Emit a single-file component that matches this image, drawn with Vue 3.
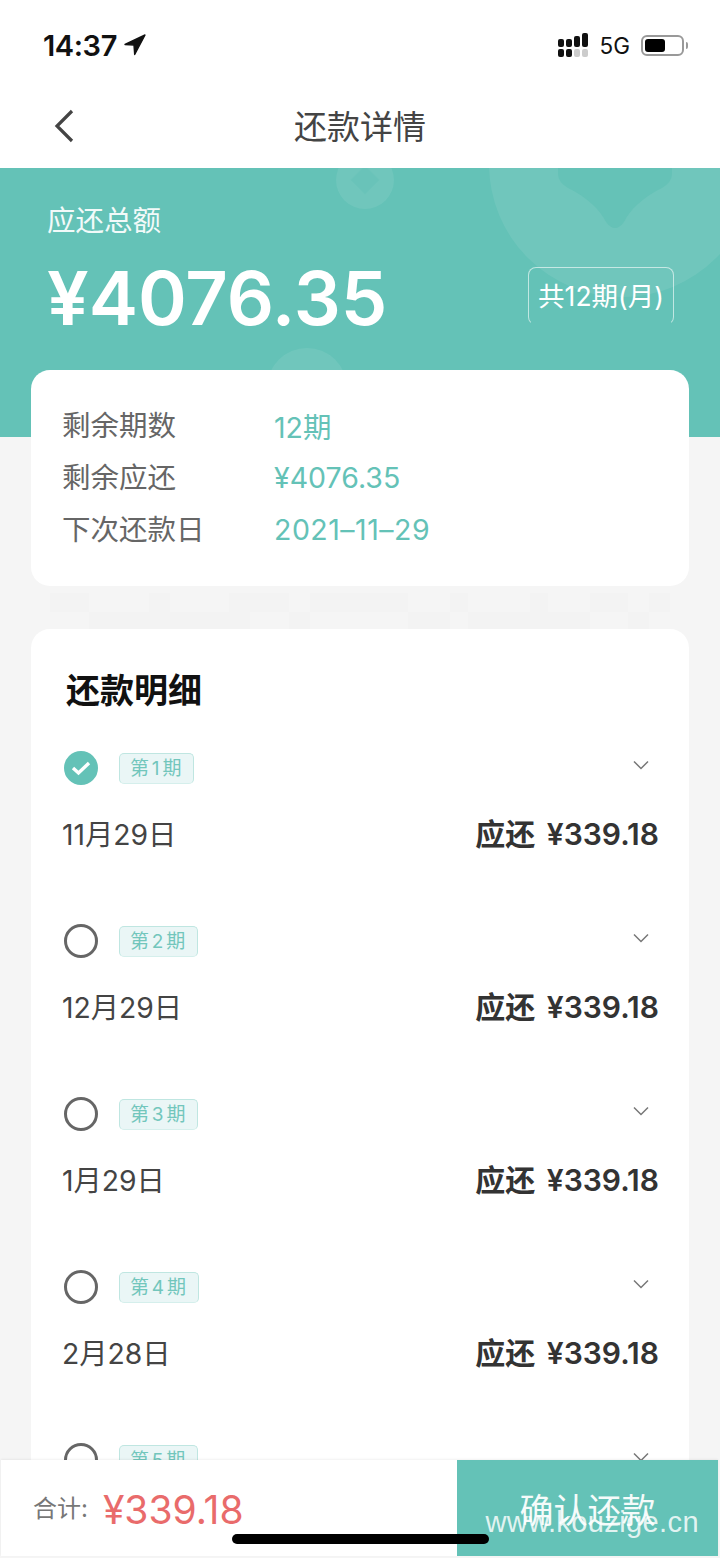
<template>
  <div class="page">
    <header class="status-bar">
      <div class="time">
        <span>14:37</span>
        <svg class="location" width="24" height="24" viewBox="0 0 24 24">
          <path d="M22 2 2 11.5l9 .6.7 9.4z" fill="#111" stroke="#111" stroke-width="1.4" stroke-linejoin="round" />
        </svg>
      </div>
      <div class="status-right">
        <div class="signal">
          <i v-for="(bar, i) in signalBars" :key="i" :class="['bar', `bar-${i}`]">
            <b></b>
            <b :class="{ dim: i > 1 }"></b>
          </i>
        </div>
        <span class="network">5G</span>
        <div class="battery"><div class="battery-level"></div></div>
        <div class="battery-cap"></div>
      </div>
    </header>

    <nav class="nav">
      <svg class="back" width="24" height="36" viewBox="0 0 24 36">
        <path d="M20 3 5 18l15 15" fill="none" stroke="#444" stroke-width="3.2" />
      </svg>
      <h1 class="nav-title">还款详情</h1>
    </nav>

    <section class="hero">
      <div class="coin coin-small"><span class="coin-hole"></span></div>
      <div class="coin coin-large"></div>
      <svg class="coin-heart" width="114" height="64" viewBox="0 0 114 64">
        <path
          d="M0 0H114V6Q114 14 104 20C84 30 72 42 66 54Q57 66 48 54C42 42 30 30 10 20Q0 14 0 6Z"
          fill="#65c2b7"
        />
      </svg>
      <div class="coin coin-bottom"></div>
      <div class="hero-label">应还总额</div>
      <div class="hero-row">
        <div class="hero-amount">¥4076.35</div>
        <div class="hero-tag">共12期(月)</div>
      </div>
    </section>

    <main class="content">
      <section class="card info-card">
        <div v-for="item in summary" :key="item.label" class="info-row">
          <span class="info-label">{{ item.label }}</span>
          <span class="info-value">{{ item.value }}</span>
        </div>
      </section>

      <svg class="noise" width="658" height="43" viewBox="0 0 658 43">
        <rect
          v-for="(block, i) in noiseBlocks"
          :key="i"
          :x="block[0]"
          :y="block[1]"
          :width="block[2]"
          :height="block[3]"
          fill="#f3f3f3"
        />
      </svg>

      <section class="card detail-card">
        <h2 class="detail-title">还款明细</h2>
        <div v-for="(row, i) in rows" :key="row.period" class="plan">
          <div class="plan-head">
            <span :class="['radio', { checked: i === 0 }]">
              <svg v-if="i === 0" width="20" height="16" viewBox="0 0 20 16">
                <path d="M2 8 7.5 13 18 3" fill="none" stroke="#fff" stroke-width="3.4" />
              </svg>
            </span>
            <span class="period">{{ row.period }}</span>
            <svg class="chevron" width="16" height="10" viewBox="0 0 16 10">
              <path d="M1 1.5 8 8.5 15 1.5" fill="none" stroke="#777" stroke-width="1.5" />
            </svg>
          </div>
          <div class="plan-body">
            <span class="plan-date">{{ row.date }}</span>
            <span class="plan-amount">应还 ¥339.18</span>
          </div>
        </div>
      </section>
    </main>

    <footer class="bottom-bar">
      <div class="total">
        <span class="total-label">合计:</span>
        <span class="total-value">¥339.18</span>
      </div>
      <button class="confirm">确认还款</button>
    </footer>
    <div class="home-indicator"></div>
    <div class="watermark">www.kouzige.cn</div>
  </div>
</template>

<script setup>
const signalBars = [0, 1, 2, 3]

const summary = [
  { label: '剩余期数', value: '12期' },
  { label: '剩余应还', value: '¥4076.35' },
  { label: '下次还款日', value: '2021–11–29' }
]

const rows = [
  { period: '第 1 期', date: '11月29日' },
  { period: '第 2 期', date: '12月29日' },
  { period: '第 3 期', date: '1月29日' },
  { period: '第 4 期', date: '2月28日' },
  { period: '第 5 期', date: '3月29日' }
]

// faint blotches in the gap between the two cards: x, y, width, height
const noiseBlocks = [
  [19, 7, 39, 19],
  [118, 7, 21, 19],
  [198, 7, 60, 19],
  [279, 7, 98, 19],
  [419, 7, 18, 19],
  [499, 7, 18, 19],
  [559, 7, 38, 19],
  [618, 7, 21, 19],
  [58, 26, 161, 17],
  [258, 26, 21, 17],
  [377, 26, 42, 17],
  [437, 26, 122, 17],
  [597, 26, 21, 17]
]
</script>

<style>
html,
body {
  margin: 0;
  background: #f5f5f5;
}
</style>

<style scoped>
.page {
  position: relative;
  width: 720px;
  height: 1558px;
  overflow: hidden;
  background: #f5f5f5;
  font-family: Inter, "Noto Sans CJK SC", sans-serif;
  color: #333;
}

.status-bar {
  height: 85px;
  box-sizing: border-box;
  padding: 28px 32px 0 43px;
  background: #fff;
  display: flex;
  justify-content: space-between;
  align-items: flex-start;
}

.time {
  display: flex;
  align-items: center;
  gap: 6px;
  height: 34px;
  font-size: 29px;
  font-weight: 600;
  color: #111;
  letter-spacing: -0.4px;
}

.status-right {
  display: flex;
  align-items: center;
  height: 34px;
}

.signal {
  display: flex;
  align-items: flex-end;
  gap: 2px;
  margin-right: 12px;
  height: 24px;
}

.bar {
  display: flex;
  flex-direction: column;
  gap: 2px;
  width: 6px;
}

.bar b {
  display: block;
  height: 8px;
  background: #111;
  border-radius: 2px;
}

.bar b.dim {
  background: #ccc;
}

.bar-2 b:first-child {
  height: 11px;
}

.bar-3 b:first-child {
  height: 14px;
}

.network {
  font-size: 22.5px;
  color: #111;
  margin-right: 11px;
}

.battery {
  width: 43px;
  height: 21px;
  box-sizing: border-box;
  border: 2px solid #999;
  border-radius: 6px;
  padding: 2px;
}

.battery-level {
  width: 20px;
  height: 100%;
  background: #000;
  border-radius: 3px;
}

.battery-cap {
  width: 2px;
  height: 7px;
  margin-left: 2px;
  background: #999;
  border-radius: 0 2px 2px 0;
}

.nav {
  position: relative;
  height: 83px;
  box-sizing: border-box;
  padding-bottom: 4px;
  background: #fff;
  display: flex;
  align-items: center;
  justify-content: center;
}

.back {
  position: absolute;
  left: 52px;
  top: 23px;
}

.nav-title {
  margin: 0;
  font-size: 33px;
  font-weight: 400;
  color: #444;
}

.hero {
  position: relative;
  height: 269px;
  box-sizing: border-box;
  padding: 34px 46px 0 47px;
  background: #64c2b7;
  overflow: hidden;
  color: #fff;
}

.coin {
  position: absolute;
  border-radius: 50%;
  background: rgba(255, 255, 255, 0.08);
}

.coin-small {
  width: 58px;
  height: 58px;
  left: 336px;
  top: -17px;
}

.coin-hole {
  position: absolute;
  left: 19px;
  top: 19px;
  width: 20px;
  height: 20px;
  background: #64c2b7;
  opacity: 0.6;
  transform: rotate(45deg);
}

.coin-large {
  width: 266px;
  height: 266px;
  left: 489px;
  top: -137px;
}

.coin-heart {
  position: absolute;
  left: 558px;
  top: 0;
}

.coin-bottom {
  width: 80px;
  height: 80px;
  left: 267px;
  top: 180px;
}

.hero-label {
  position: relative;
  font-size: 28.5px;
  line-height: 38px;
  opacity: 0.92;
}

.hero-row {
  position: relative;
  display: flex;
  justify-content: space-between;
  align-items: center;
  margin-top: 18px;
}

.hero-amount {
  font-size: 74px;
  line-height: 80px;
  font-weight: 600;
}

.hero-tag {
  width: 146px;
  height: 58px;
  margin-top: -4px;
  box-sizing: border-box;
  border: 1px solid rgba(255, 255, 255, 0.6);
  border-bottom-color: transparent;
  border-radius: 8px;
  font-size: 26.5px;
  line-height: 56px;
  text-align: center;
  white-space: nowrap;
}

.content {
  margin-top: -67px;
  padding: 0 31px;
  position: relative;
}

.card {
  background: #fff;
  border-radius: 19px;
}

.info-card {
  height: 216px;
  box-sizing: border-box;
  padding: 29px 31px 0;
}

.info-row {
  display: flex;
  height: 52px;
  align-items: center;
  font-size: 28.5px;
}

.info-label {
  width: 212px;
  margin-top: -3px;
  color: #666;
}

.info-value {
  color: #64c2b7;
}

.info-row:last-child .info-value {
  letter-spacing: 0.5px;
}

.noise {
  display: block;
}

.detail-card {
  padding: 39px 31px 0;
  height: 900px;
  box-sizing: border-box;
}

.detail-title {
  margin: 0 0 0 4px;
  font-size: 34px;
  line-height: 46px;
  font-weight: 700;
  color: #111;
}

.plan {
  height: 173px;
}

.plan-head {
  position: relative;
  display: flex;
  align-items: center;
  height: 36px;
  padding-top: 36px;
  padding-left: 2px;
}

.radio {
  width: 34px;
  height: 34px;
  box-sizing: border-box;
  border: 3px solid #666;
  border-radius: 50%;
  display: flex;
  align-items: center;
  justify-content: center;
  margin-right: 21px;
}

.radio.checked {
  background: #64c2b7;
  border-color: #64c2b7;
}

.period {
  height: 31px;
  box-sizing: border-box;
  padding: 0 12px 0 10px;
  border: 1px solid #bfe6e1;
  border-bottom-color: #d5efec;
  border-radius: 5px;
  background: #eaf6f6;
  color: #72c6bc;
  font-size: 19px;
  line-height: 29px;
  word-spacing: -2.5px;
}

.chevron {
  position: absolute;
  right: 9px;
  top: 46px;
}

.plan-body {
  display: flex;
  justify-content: space-between;
  align-items: center;
  margin-top: 28px;
  height: 36px;
}

.plan-date {
  font-size: 28.3px;
  color: #444;
}

.plan-amount {
  font-size: 30px;
  font-weight: 600;
  word-spacing: 4px;
  margin-right: -1px;
  color: #333;
}

.bottom-bar {
  position: absolute;
  left: 1px;
  right: 2px;
  top: 1460px;
  height: 96px;
  background: #fff;
  display: flex;
  justify-content: space-between;
  box-shadow: 0 -1px 2px rgba(0, 0, 0, 0.06);
}

.total {
  display: flex;
  align-items: center;
  padding-left: 32px;
  height: 96px;
}

.total-label {
  font-size: 24px;
  color: #777;
  margin-right: 15px;
  margin-top: -4px;
}

.total-value {
  font-size: 39px;
  color: #e96b6b;
  margin-top: 2px;
}

.confirm {
  width: 261px;
  height: 96px;
  border: 0;
  padding: 0;
  background: #64c2b7;
  color: #f5fbfa;
  font-family: inherit;
  font-size: 34px;
}

.home-indicator {
  position: absolute;
  left: 232px;
  top: 1534px;
  width: 257px;
  height: 10px;
  border-radius: 5px;
  background: #000;
}

.watermark {
  position: absolute;
  right: 21px;
  top: 1506px;
  font-family: "Liberation Sans", sans-serif;
  font-size: 29px;
  letter-spacing: 0.4px;
  color: rgba(255, 255, 255, 0.82);
}
</style>
